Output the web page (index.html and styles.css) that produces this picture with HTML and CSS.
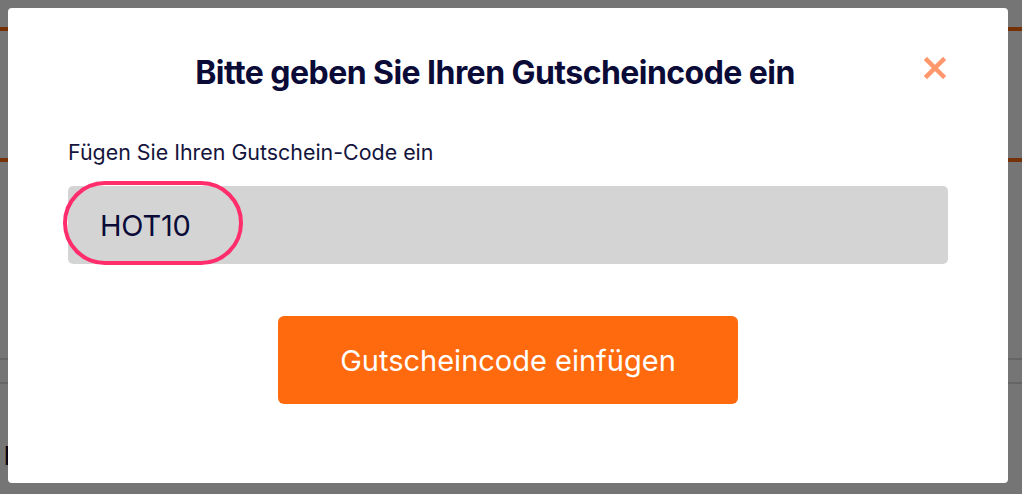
FILE: index.html
```html
<!DOCTYPE html>
<html lang="de">
<head>
    <meta charset="UTF-8">
    <meta name="viewport" content="width=device-width, initial-scale=1.0">
    <title>Gutscheincode</title>
    <link rel="stylesheet" href="styles.css">
</head>
<body>
    <div class="page">
        <div class="topbar"></div>
        <div class="nav"></div>
        <div class="row-line"></div>
        <div class="row-line second"></div>
        <div class="page-text">Ihr Warenkorb</div>
    </div>

    <div class="overlay">
        <div class="modal">
            <button class="close" aria-label="Schließen">
                <svg width="22" height="22" viewBox="0 0 22 22">
                    <path d="M3 3 L19 19 M19 3 L3 19" stroke="#ff976d" stroke-width="4.5" stroke-linecap="square"/>
                </svg>
            </button>
            <h2 class="title">Bitte geben Sie Ihren Gutscheincode ein</h2>
            <label class="label" for="code">Fügen Sie Ihren Gutschein-Code ein</label>
            <div class="field">
                <input type="text" id="code" class="code-input" value="HOT10">
                <span class="highlight"></span>
            </div>
            <div class="actions">
                <button class="submit">Gutscheincode einfügen</button>
            </div>
        </div>
    </div>
</body>
</html>
```

FILE: styles.css
```css
body {
    font-family: Inter, "Noto Sans", sans-serif;
    background-color: #fff;
    margin: 0;
    padding: 0;
    height: 494px;
    overflow: hidden;
}

.page {
    padding-top: 27px;
}

.topbar {
    height: 4px;
    background-color: #ff6a0e;
}

.nav {
    height: 127px;
    border-bottom: 4px solid #ff6a0e;
}

.row-line {
    margin-top: 196px;
    height: 2px;
    background-color: #ddd;
}

.row-line.second {
    margin-top: 22px;
}

.page-text {
    margin-top: 56px;
    padding-left: 4px;
    font-size: 26px;
    font-weight: 700;
    color: #0a0a2e;
}

.overlay {
    position: fixed;
    inset: 0;
    background-color: rgba(0, 0, 0, 0.54);
}

.modal {
    position: absolute;
    left: 8px;
    top: 8px;
    width: 1000px;
    height: 475px;
    box-sizing: border-box;
    background-color: #fff;
    border-radius: 4px;
    padding: 45px 60px 0;
}

.close {
    position: absolute;
    top: 49px;
    right: 62px;
    padding: 0;
    border: none;
    background: none;
    cursor: pointer;
    line-height: 0;
}

.title {
    margin: 0 26px 47px 0;
    text-align: center;
    font-size: 32px;
    font-weight: 700;
    letter-spacing: -0.55px;
    line-height: 40px;
    color: #0b0b38;
}

.label {
    display: block;
    font-size: 21.4px;
    line-height: 24px;
    color: #14143c;
    margin-bottom: 22px;
}

.field {
    position: relative;
}

.code-input {
    display: block;
    width: 100%;
    height: 78px;
    box-sizing: border-box;
    border: none;
    border-radius: 5px;
    background-color: #d4d4d4;
    padding: 0 32px;
    font-family: inherit;
    font-size: 29px;
    letter-spacing: -0.2px;
    color: #0b0b38;
}

.highlight {
    position: absolute;
    left: -5px;
    top: -5px;
    width: 180px;
    height: 84px;
    border: 4.5px solid #ff2d6c;
    border-radius: 42px;
    box-sizing: border-box;
}

.actions {
    display: flex;
    justify-content: center;
    margin-top: 52px;
}

.submit {
    width: 460px;
    height: 88px;
    border: none;
    border-radius: 6px;
    background-color: #ff6a0e;
    color: #fff;
    font-family: inherit;
    font-size: 29px;
    cursor: pointer;
}
```
